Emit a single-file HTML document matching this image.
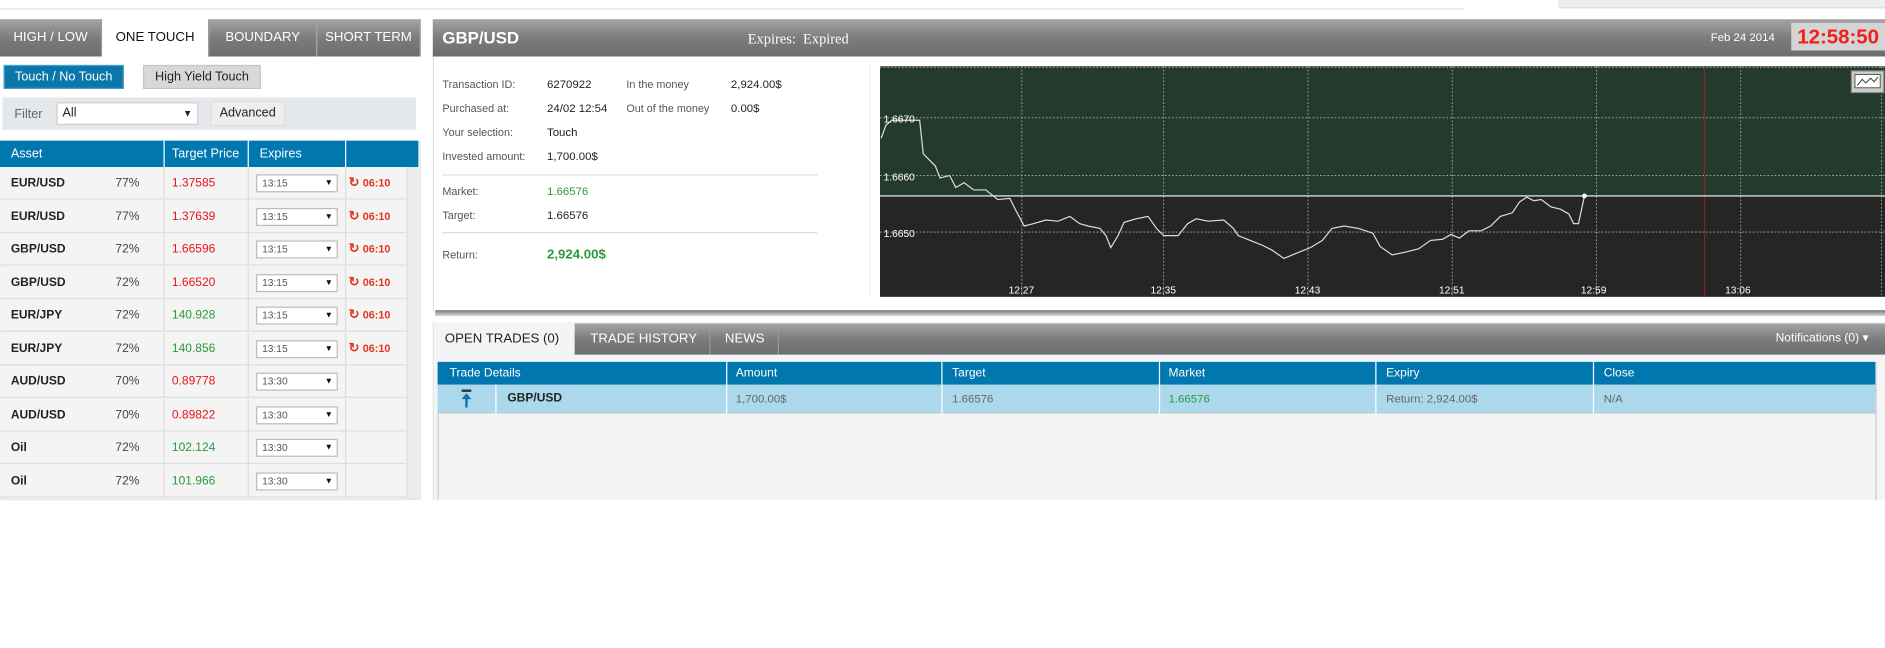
<!DOCTYPE html>
<html><head><meta charset="utf-8"><style>
*{margin:0;padding:0;box-sizing:border-box}
html,body{width:1885px;height:648px;overflow:hidden;background:#fff}
#w{position:absolute;left:0;top:0;width:1568px;height:539px;transform:scale(1.20217);transform-origin:0 0;font-family:"Liberation Sans",sans-serif;font-size:9.5px;color:#222}
.a{position:absolute}
.g{background:linear-gradient(#a4a5a7,#7b7c7e 50%,#6c6d6f)}
.tab{position:absolute;top:16px;height:31px;line-height:31px;color:#fff;font-size:11px;text-align:center;border-right:1px solid #999}
.hd{background:#0077ae;color:#fff;font-size:11px}
.row{position:absolute;left:0;width:338px;height:27px;background:#f4f4f4;border-bottom:1px solid #ddd}
.row div{position:absolute;top:0;height:27px;line-height:27px}
.row .sel{position:absolute;top:6px;left:213px;width:68px;height:15px;background:#fff;border:1px solid #bbb;font-size:8.5px;line-height:13px;padding-left:4px;color:#555}
.row .sel:after{content:"▼";position:absolute;right:3px;font-size:7px;color:#111}
.row .t{left:290px;color:#e8321c;font-weight:bold;font-size:9px}
.lb{color:#555;font-size:9px}
</style></head><body><div id="w">
<div class="a" style="left:0;top:0;width:1218px;height:8px;border-bottom:1px solid #e6e6e6"></div>
<div class="a" style="left:1296px;top:0;width:272px;height:7px;background:#eee;border-bottom:1px solid #ddd"></div>
<div class="a" style="left:0;top:16px;width:350px;height:400px;background:#f4f4f4;border:1px solid #e4e4e4"></div>
<div class="tab g" style="left:0;width:85px">HIGH / LOW</div>
<div class="tab" style="left:85px;width:89px;background:#fff;color:#111">ONE TOUCH</div>
<div class="tab g" style="left:174px;width:90px">BOUNDARY</div>
<div class="tab g" style="left:264px;width:86px">SHORT TERM</div>
<div class="a" style="left:0;top:47px;width:350px;height:70px;background:#fff"></div>
<div class="a" style="left:3px;top:54px;width:100px;height:20px;background:#0a76aa;color:#fff;font-size:10.5px;line-height:19px;text-align:center;border:1px solid #4aa0c8">Touch / No Touch</div>
<div class="a" style="left:119px;top:54px;width:98px;height:20px;background:#d8d8d8;color:#222;font-size:10.5px;line-height:19px;text-align:center;border:1px solid #c4c4c4">High Yield Touch</div>
<div class="a" style="left:2px;top:81px;width:344px;height:27px;background:#e5e8eb"></div>
<div class="a" style="left:12px;top:89px;color:#666;font-size:10.5px">Filter</div>
<div class="a" style="left:47px;top:85px;width:118px;height:19px;background:#fff;border:1px solid #ccc;font-size:10.5px;line-height:17px;padding-left:4px">All<span style="position:absolute;right:4px;font-size:8px">▼</span></div>
<div class="a" style="left:175px;top:84px;width:62px;height:21px;background:#eee;border:1px solid #ddd;font-size:10.5px;line-height:19px;text-align:center">Advanced</div>
<div class="a hd" style="left:0;top:117px;width:348px;height:22px"></div>
<div class="a" style="left:136px;top:117px;width:1px;height:22px;background:#fff"></div>
<div class="a" style="left:206px;top:117px;width:1px;height:22px;background:#fff"></div>
<div class="a" style="left:287px;top:117px;width:1px;height:22px;background:#fff"></div>
<div class="a" style="left:9px;top:122px;color:#fff;font-size:10.5px">Asset</div>
<div class="a" style="left:143px;top:122px;color:#fff;font-size:10.5px">Target Price</div>
<div class="a" style="left:216px;top:122px;color:#fff;font-size:10.5px">Expires</div>
<div class="a" style="left:338px;top:139px;width:10px;height:276px;background:#ececec;border-left:1px solid #ddd"></div>
<div id="rows"></div>
<div class="a g" style="left:360px;top:16px;width:1208px;height:31px"></div>
<div class="a" style="left:368px;top:23px;color:#fff;font-weight:bold;font-size:14px">GBP/USD</div>
<div class="a" style="left:622px;top:25px;color:#fff;font-family:'Liberation Serif',serif;font-size:12px">Expires:&nbsp; Expired</div>
<div class="a" style="left:1423px;top:26px;color:#fff;font-size:9.5px">Feb 24 2014</div>
<div class="a" style="left:1490px;top:19px;width:78px;height:23px;background:#d4d4d4;color:#f0201a;font-weight:bold;font-size:17px;line-height:23px;text-align:center">12:58:50</div>
<div class="a" style="left:360px;top:47px;width:1208px;height:212px;background:#fff;border-left:1px solid #e4e4e4"></div>
<div class="a" style="left:362px;top:258px;width:1206px;height:5px;background:linear-gradient(#777,#ddd)"></div>
<div class="a lb" style="left:368px;top:65px">Transaction ID:</div><div class="a" style="left:455px;top:65px">6270922</div>
<div class="a lb" style="left:521px;top:65px">In the money</div><div class="a" style="left:608px;top:65px">2,924.00$</div>
<div class="a lb" style="left:368px;top:85px">Purchased at:</div><div class="a" style="left:455px;top:85px">24/02 12:54</div>
<div class="a lb" style="left:521px;top:85px">Out of the money</div><div class="a" style="left:608px;top:85px">0.00$</div>
<div class="a lb" style="left:368px;top:105px">Your selection:</div><div class="a" style="left:455px;top:105px">Touch</div>
<div class="a lb" style="left:368px;top:125px">Invested amount:</div><div class="a" style="left:455px;top:125px">1,700.00$</div>
<div class="a" style="left:368px;top:145px;width:312px;height:1px;background:#ddd"></div>
<div class="a lb" style="left:368px;top:154px">Market:</div><div class="a" style="left:455px;top:154px;color:#2a9a3a">1.66576</div>
<div class="a lb" style="left:368px;top:174px">Target:</div><div class="a" style="left:455px;top:174px">1.66576</div>
<div class="a" style="left:368px;top:193px;width:312px;height:1px;background:#ddd"></div>
<div class="a lb" style="left:368px;top:207px">Return:</div><div class="a" style="left:455px;top:206px;color:#2a9a3a;font-weight:bold;font-size:11px">2,924.00$</div>
<div class="a" style="left:723px;top:55px;width:1px;height:190px;background:#eee"></div>
<svg class="a" style="left:732px;top:55px" width="836" height="192" viewBox="732 55 836 192">
<rect x="732" y="55" width="836" height="108" fill="#243a2c"/>
<rect x="732" y="163" width="836" height="84" fill="#252525"/>
<g stroke="#aaa" stroke-width="0.7" stroke-dasharray="1.5 1.5" fill="none">
<line x1="850" y1="55" x2="850" y2="247"/><line x1="968" y1="55" x2="968" y2="247"/><line x1="1088" y1="55" x2="1088" y2="247"/><line x1="1208" y1="55" x2="1208" y2="247"/><line x1="1328" y1="55" x2="1328" y2="247"/><line x1="1448" y1="55" x2="1448" y2="247"/><line x1="1565" y1="55" x2="1565" y2="247"/>
<line x1="732" y1="98" x2="1568" y2="98"/><line x1="732" y1="146" x2="1568" y2="146"/><line x1="732" y1="193" x2="1568" y2="193"/><line x1="732" y1="56" x2="1568" y2="56"/>
</g>
<line x1="1418" y1="55" x2="1418" y2="247" stroke="#a02020" stroke-width="0.8"/>
<line x1="732" y1="163" x2="1568" y2="163" stroke="#fff" stroke-width="1"/>
<polyline fill="none" stroke="#ddd" stroke-width="1" points="733,115 737,104 742,100 765,100 768,128 778,138 782,148 790,146 795,156 802,152 810,158 820,158 830,166 840,165 845,175 852,188 860,186 870,183 880,184 890,180 898,186 905,188 915,190 920,196 924,206 930,196 935,185 945,182 955,180 962,190 968,196 980,196 988,186 995,182 1005,184 1018,183 1026,190 1030,196 1040,200 1050,204 1058,208 1068,215 1080,210 1090,206 1100,200 1108,190 1118,188 1130,190 1142,194 1148,205 1158,212 1168,210 1180,207 1190,200 1200,199 1207,195 1214,198 1222,192 1232,192 1240,188 1248,180 1258,177 1264,168 1270,164 1276,167 1282,166 1290,172 1298,174 1305,178 1309,186 1313,186 1318,163"/>
<circle cx="1318" cy="163" r="2" fill="#fff"/>
<g fill="#fff" font-size="8.5" font-family="Liberation Sans,sans-serif">
<text x="735" y="102">1.6670</text><text x="735" y="150">1.6660</text><text x="735" y="197">1.6650</text>
<text x="839" y="244">12:27</text><text x="957" y="244">12:35</text><text x="1077" y="244">12:43</text><text x="1197" y="244">12:51</text><text x="1315" y="244">12:59</text><text x="1435" y="244">13:06</text>
</g>
<rect x="1540" y="59" width="27" height="18" fill="#ccc" stroke="#888"/>
<rect x="1543" y="62" width="21" height="11" fill="#fff" stroke="#555" stroke-width=".8"/>
<polyline points="1545,71 1549,66 1552,69 1556,65 1559,68 1562,64" fill="none" stroke="#333" stroke-width=".8"/>
</svg>
<div class="a" style="left:360px;top:268px;width:1208px;height:148px;background:#f2f4f6;border-left:1px solid #e4e4e4"></div>
<div class="a g" style="left:478px;top:269px;width:1090px;height:26px"></div>
<div class="a" style="left:370px;top:276px;font-size:11px;color:#222">OPEN TRADES (0)</div>
<div class="a" style="left:491px;top:276px;font-size:11px;color:#fff">TRADE HISTORY</div>
<div class="a" style="left:590px;top:269px;width:1px;height:26px;background:#999"></div>
<div class="a" style="left:647px;top:269px;width:1px;height:26px;background:#999"></div>
<div class="a" style="left:603px;top:276px;font-size:11px;color:#fff">NEWS</div>
<div class="a" style="left:1477px;top:276px;font-size:10px;color:#fff">Notifications (0) ▾</div>
<div class="a hd" style="left:364px;top:301px;width:1196px;height:19px"></div>
<div class="a" style="left:364px;top:320px;width:1196px;height:24px;background:#acd8ec;border-bottom:1px solid #ccc"></div>
<div class="a" style="left:1560px;top:301px;width:1px;height:115px;background:#ccc"></div>
<div class="a" style="left:364px;top:344px;width:1px;height:72px;background:#ccc"></div>
<div class="a" style="left:374px;top:305px;color:#fff;font-size:10px">Trade Details</div>
<div class="a" style="left:612px;top:305px;color:#fff;font-size:10px">Amount</div>
<div class="a" style="left:792px;top:305px;color:#fff;font-size:10px">Target</div>
<div class="a" style="left:972px;top:305px;color:#fff;font-size:10px">Market</div>
<div class="a" style="left:1153px;top:305px;color:#fff;font-size:10px">Expiry</div>
<div class="a" style="left:1334px;top:305px;color:#fff;font-size:10px">Close</div>
<div class="a" style="left:604px;top:301px;width:1px;height:43px;background:#fff"></div>
<div class="a" style="left:783px;top:301px;width:1px;height:43px;background:#fff"></div>
<div class="a" style="left:964px;top:301px;width:1px;height:43px;background:#fff"></div>
<div class="a" style="left:1144px;top:301px;width:1px;height:43px;background:#fff"></div>
<div class="a" style="left:1325px;top:301px;width:1px;height:43px;background:#fff"></div>
<div class="a" style="left:412px;top:320px;width:1px;height:24px;background:#fff"></div>
<svg class="a" style="left:383px;top:324px" width="10" height="16"><rect x="1" y="0" width="8" height="2" fill="#333"/><path d="M5 3 L1 8 H4 V15 H6 V8 H9 Z" fill="#1273a8"/></svg>
<div class="a" style="left:422px;top:326px;font-weight:bold;font-size:10px">GBP/USD</div>
<div class="a" style="left:612px;top:327px;color:#666">1,700.00$</div>
<div class="a" style="left:792px;top:327px;color:#666">1.66576</div>
<div class="a" style="left:972px;top:327px;color:#2a9a3a">1.66576</div>
<div class="a" style="left:1153px;top:327px;color:#666">Return: 2,924.00$</div>
<div class="a" style="left:1334px;top:327px;color:#666">N/A</div>
</div>
<script>
var d=[["EUR/USD","77%","1.37585","r","13:15",1],["EUR/USD","77%","1.37639","r","13:15",1],["GBP/USD","72%","1.66596","r","13:15",1],["GBP/USD","72%","1.66520","r","13:15",1],["EUR/JPY","72%","140.928","g","13:15",1],["EUR/JPY","72%","140.856","g","13:15",1],["AUD/USD","70%","0.89778","r","13:30",0],["AUD/USD","70%","0.89822","r","13:30",0],["Oil","72%","102.124","g","13:30",0],["Oil","72%","101.966","g","13:30",0]];
var h="";d.forEach(function(r,i){var y=139+i*27.5;h+='<div class="row" style="top:'+y+'px"><div style="left:9px;font-weight:bold;font-size:10px">'+r[0]+'</div><div style="left:96px;color:#444;font-size:10px">'+r[1]+'</div><div style="left:136px;width:1px;background:#ddd"></div><div style="left:143px;font-size:10px;color:'+(r[3]=="r"?"#e8141c":"#2a9a3a")+'">'+r[2]+'</div><div style="left:206px;width:1px;background:#ddd"></div><div class="sel">'+r[4]+'</div><div style="left:287px;width:1px;background:#ddd"></div>'+(r[5]?'<div class="t"><span style="font-size:11px">&#x21BB;</span> 06:10</div>':'')+'</div>'});
document.getElementById("rows").outerHTML=h;
</script>
</body></html>
